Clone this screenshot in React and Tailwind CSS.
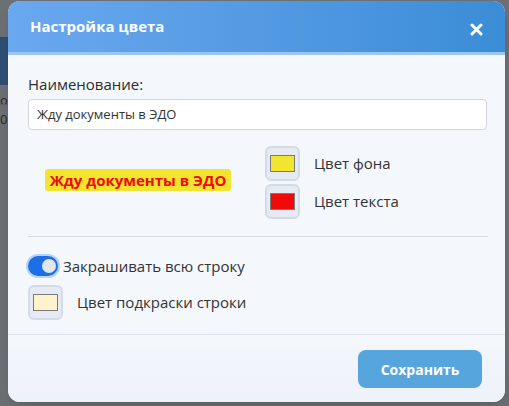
import { useState } from "react";

const Swatch = ({ color }) => (
  <button className="flex h-[35px] w-[35px] items-center justify-center rounded-md border-2 border-[#d3dbe8] bg-[#e6ebf3]">
    <span className="block h-[17px] w-[25px] border border-[#7a7a7a]" style={{ backgroundColor: color }} />
  </button>
);

export default function App() {
  const [fill, setFill] = useState(true);

  return (
    <div
      className="relative h-[406px] w-[509px] overflow-hidden bg-[#6c6f74]"
      style={{ fontFamily: "'Open Sans', 'Noto Sans', sans-serif" }}
    >
      {/* page behind the overlay */}
      <div className="absolute left-0 top-[37px] h-[48px] w-[10px] bg-[#2e4f74]" />
      <div className="absolute left-0 top-[91px] text-[13px] text-[#2a2a2a]">о</div>
      <div className="absolute left-0 top-[104px] h-px w-[10px] bg-[#5d6066]" />
      <div className="absolute left-0 top-[110px] text-[13px] text-[#2a2a2a]">05</div>

      {/* modal */}
      <div className="relative ml-[8px] mt-px flex h-[401px] w-[497px] flex-col overflow-hidden rounded-xl bg-[#f4f7fc] shadow-lg">
        <header className="flex h-[51px] items-center justify-between bg-gradient-to-r from-[#6aa8f0] to-[#3a8dd6] pl-[22px] pr-[22px]">
          <h1 className="text-[15px] font-bold text-white">Настройка цвета</h1>
          <button className="mt-[5px] text-white">
            <svg width="13" height="13" viewBox="0 0 13 13">
              <path d="M2 2L11 11M11 2L2 11" stroke="white" strokeWidth="3" strokeLinecap="round" />
            </svg>
          </button>
        </header>
        <div className="h-[3px] bg-[#9cc6ef]" />

        <div className="flex flex-1 flex-col px-[20px] pt-[18px]">
          <label className="text-[15px] text-[#2d2d2d]">Наименование:</label>
          <input
            defaultValue="Жду документы в ЭДО"
            className="mt-[3px] h-[31px] w-[459px] rounded border border-[#d2d6dc] bg-white px-[8px] text-[13px] text-[#333]"
          />

          <div className="mt-[16px] flex items-center">
            <div className="mb-[4px] flex w-[220px] justify-center">
              <span className="rounded-[3px] bg-[#f2e52f] px-[5px] text-[15px] font-bold leading-[22px] text-[#f00a0a]">
                Жду документы в ЭДО
              </span>
            </div>
            <div className="ml-[17px] flex flex-col gap-[3px]">
              <div className="flex items-center gap-[14px]">
                <Swatch color="#f2e52f" />
                <span className="text-[15px] text-[#333]">Цвет фона</span>
              </div>
              <div className="flex items-center gap-[14px]">
                <Swatch color="#f00a0a" />
                <span className="text-[15px] text-[#333]">Цвет текста</span>
              </div>
            </div>
          </div>

          <div className="mt-[17px] h-px w-[460px] bg-[#d7dce4]" />

          <div className="mt-[18px] flex items-center gap-[5px]">
            <button
              onClick={() => setFill((v) => !v)}
              className="flex h-[20px] w-[30px] items-center rounded-full bg-[#1c6fe6] px-[2px] ring-2 ring-[#b7d3f7]"
            >
              <span className={`block h-[14px] w-[14px] rounded-full bg-[#e3e6ea] ${fill ? "ml-auto" : ""}`} />
            </button>
            <span className="text-[15px] text-[#333]">Закрашивать всю строку</span>
          </div>

          <div className="mt-[8px] flex items-center gap-[14px]">
            <Swatch color="#fff2cc" />
            <span className="text-[15px] text-[#333]">Цвет подкраски строки</span>
          </div>
        </div>

        <footer className="flex h-[68px] items-start justify-end border-t border-[#dde3ec] bg-gradient-to-b from-[#f4f7fc] to-[#eef2f9] pr-[23px] pt-[15px]">
          <button className="h-[38px] w-[124px] rounded-lg bg-[#57a5dd] text-[14px] font-bold text-white">
            Сохранить
          </button>
        </footer>
      </div>
    </div>
  );
}
